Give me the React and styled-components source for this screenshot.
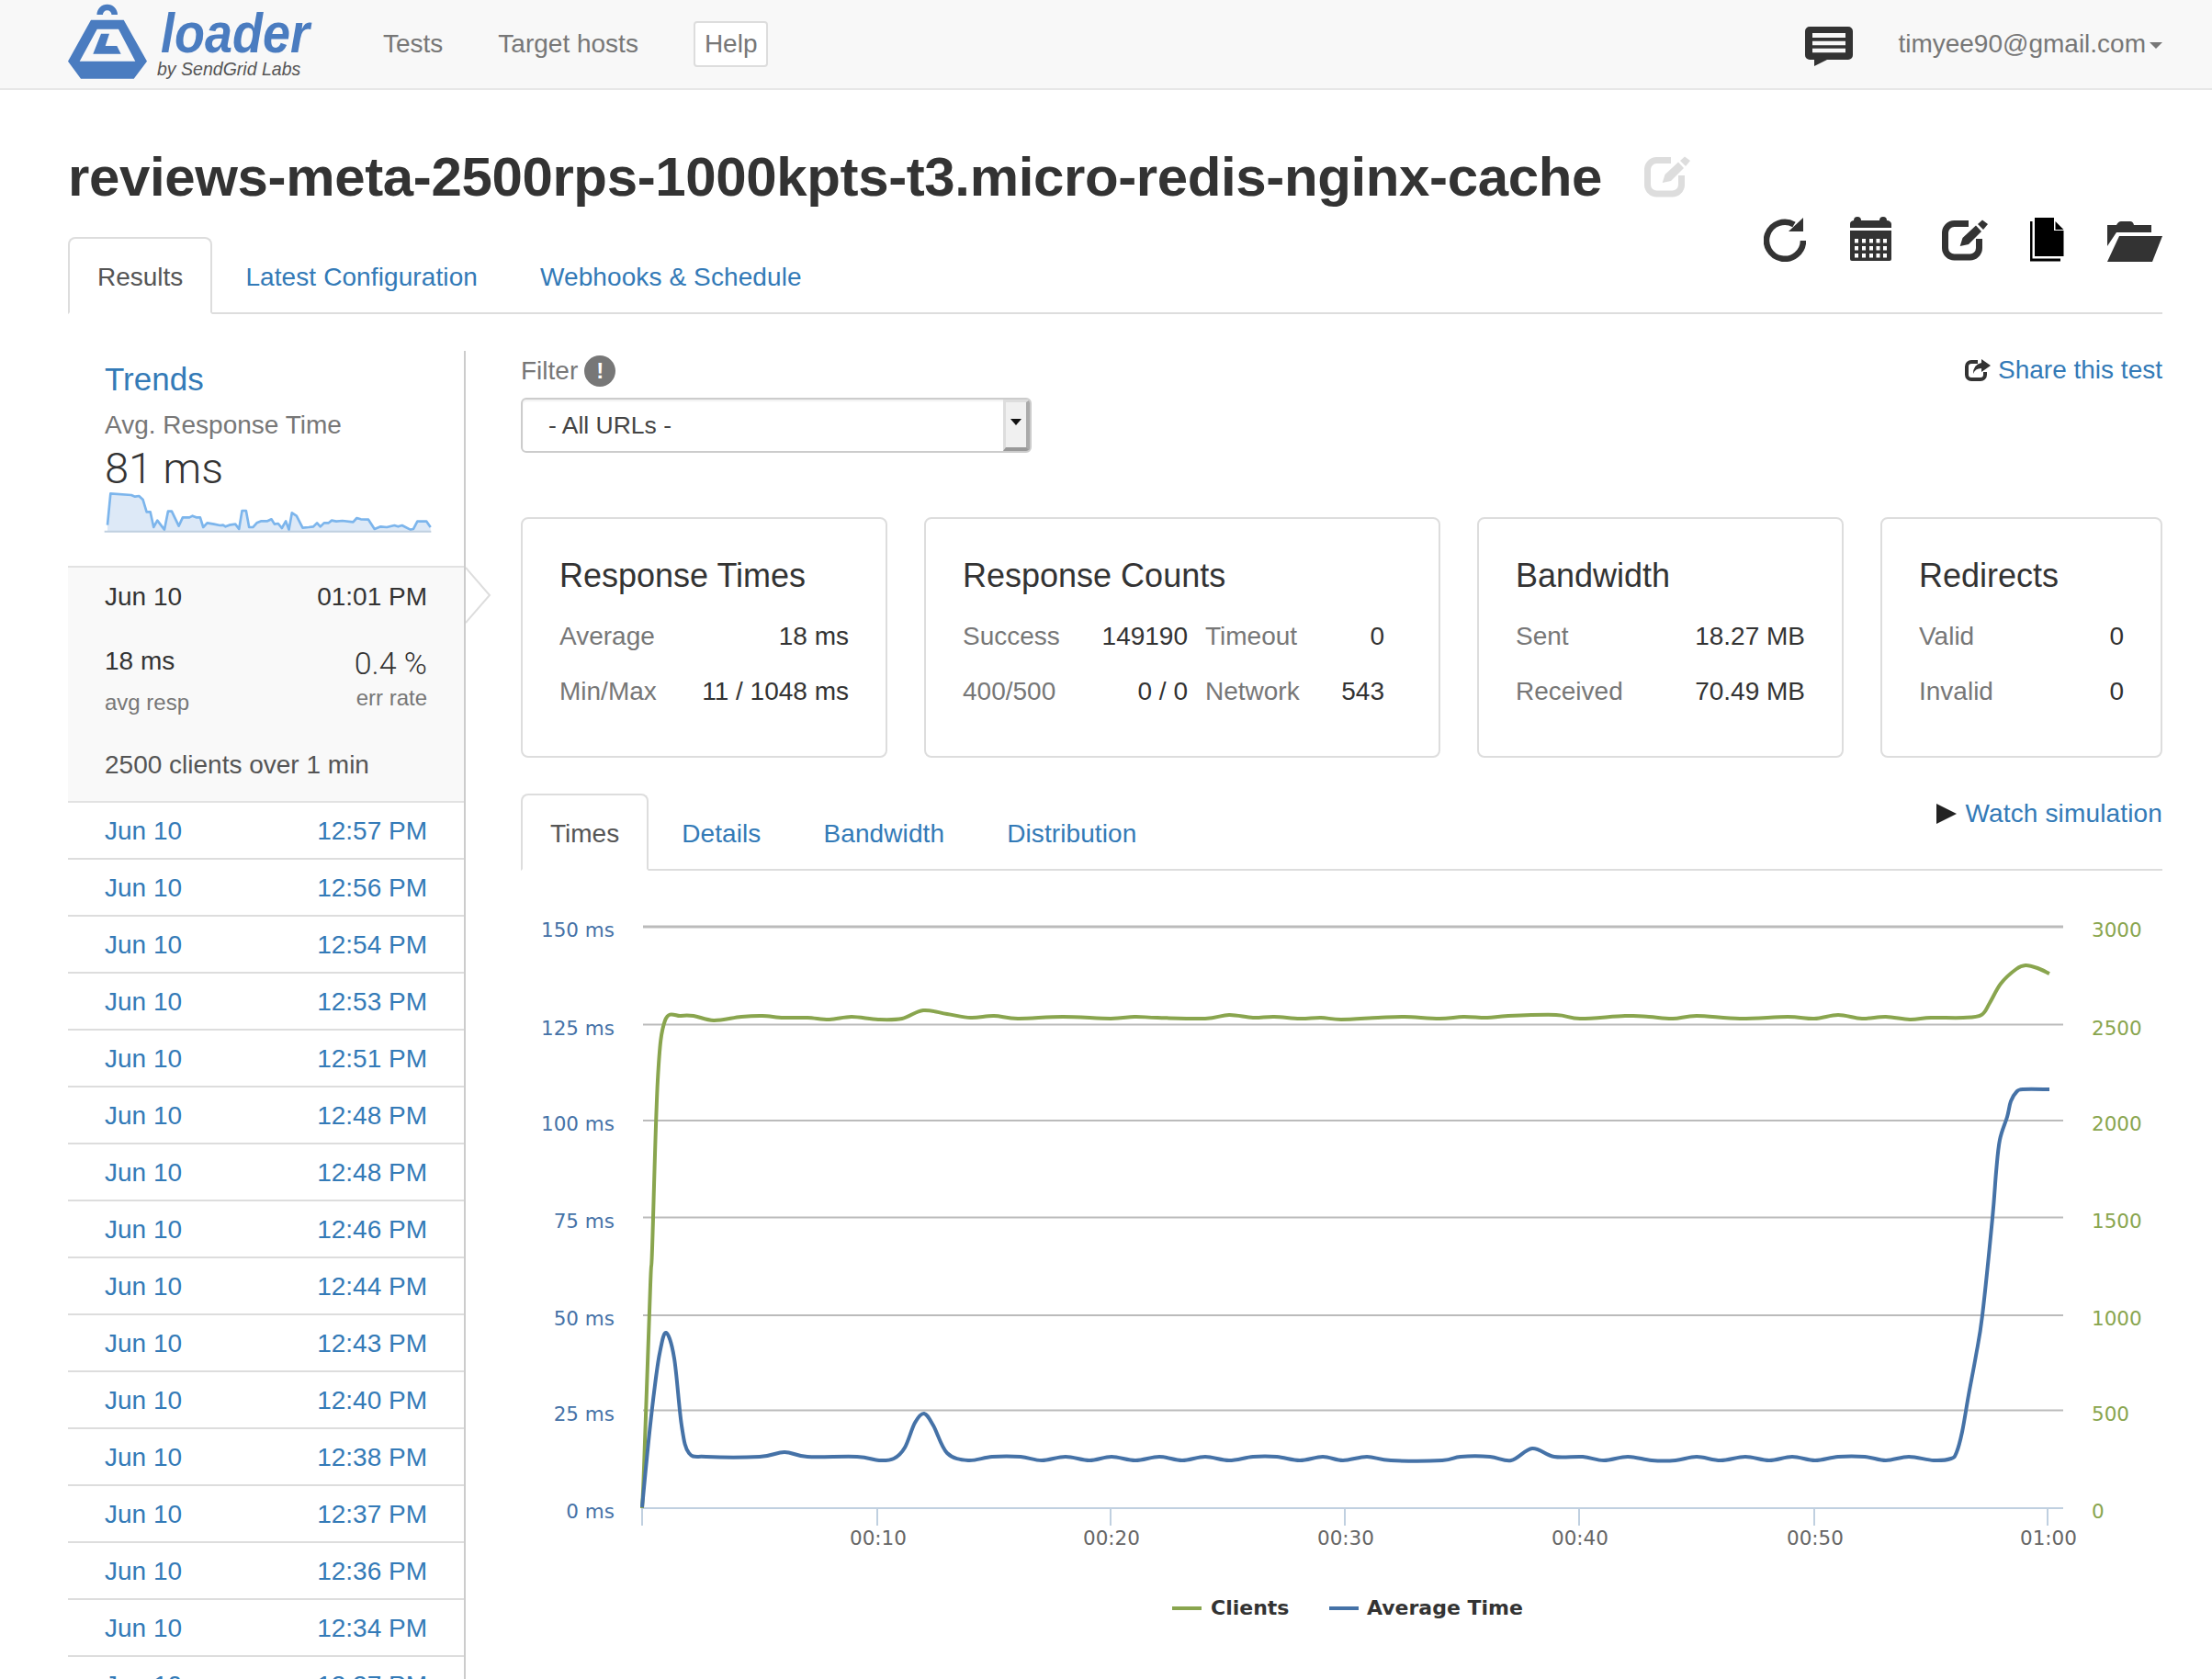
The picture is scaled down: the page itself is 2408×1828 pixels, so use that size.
import React from "react";
import styled, { createGlobalStyle } from "styled-components";

const GlobalStyle = createGlobalStyle`
	html, body {
		margin: 0;
		background: #fff;
		height: 1828px;
		overflow: hidden;
	}
	body {
		font-family: "Liberation Sans", Arial, sans-serif;
		font-size: 28px;
		color: #333;
	}
`;

const BLUE = "#337ab7";

// Navbar
const Navbar = styled.nav`
	display: flex;
	align-items: center;
	height: 96px;
	padding: 0 54px 0 74px;
	background: #f8f8f8;
	border-bottom: 2px solid #e7e7e7;
`;

const Brand = styled.div`
	display: flex;
	align-items: flex-start;
	width: 343px;
	height: 96px;
`;

const BrandText = styled.div`
	display: flex;
	flex-direction: column;
	margin-left: 13px;
`;

const BrandName = styled.span`
	font-size: 62px;
	font-weight: 700;
	font-style: italic;
	line-height: 50px;
	margin-top: 11px;
	transform: scaleX(0.87);
	transform-origin: left center;
	color: #4a7cc0;
`;

const BrandSub = styled.span`
	font-size: 21px;
	font-style: italic;
	line-height: 24px;
	margin: 2px 0 0 -4px;
	transform: scaleX(0.93);
	transform-origin: left center;
	color: #555;
`;

const NavLink = styled.a`
	color: #777;
	margin-right: 60px;
`;

const HelpButton = styled.a`
	display: flex;
	align-items: center;
	height: 46px;
	padding: 0 10px;
	border: 2px solid #ddd;
	border-radius: 4px;
	color: #777;
	background: #fff;
`;

const NavRight = styled.div`
	display: flex;
	align-items: center;
	margin-left: auto;
	color: #777;
`;

const ChatIcon = styled.svg`
	width: 52px;
	height: 43px;
	margin: 4px 49px 0 0;
`;

const Caret = styled.span`
	width: 0;
	height: 0;
	margin: 2px 0 0 4px;
	border-style: solid;
	border-width: 7px 7px 0;
	border-color: #777 transparent transparent;
`;

// Page header
const Page = styled.div`
	padding: 0 54px 0 74px;
`;

const TitleRow = styled.div`
	display: flex;
	align-items: center;
	margin: 60px 0 30px;
	height: 70px;
`;

const Title = styled.h1`
	margin: 0;
	font-size: 60px;
	line-height: 70px;
	font-weight: 700;
	letter-spacing: -0.37px;
	color: #333;
`;

const TitleEdit = styled.svg`
	width: 51px;
	height: 46px;
	margin: 0 0 0 46px;
	fill: #ddd;
	stroke: #ddd;
`;

const TabBar = styled.div`
	display: flex;
	align-items: flex-start;
	justify-content: space-between;
	height: 82px;
	border-bottom: 2px solid #ddd;
`;

const Tabs = styled.div`
	display: flex;
`;

const Tab = styled.a`
	display: block;
	box-sizing: border-box;
	height: 84px;
	line-height: 84px;
	padding: 0 30px;
	margin-right: 4px;
	letter-spacing: 0.1px;
	border: 2px solid transparent;
	border-radius: 8px 8px 0 0;
	color: ${BLUE};
	${(p) => p.$active && `
		color: #555;
		letter-spacing: 0;
		background: #fff;
		border-color: #ddd #ddd #fff;
	`}
`;

const Toolbar = styled.div`
	display: flex;
	align-items: flex-end;
	height: 51px;
	margin-top: -24px;
`;

const ToolIcon = styled.svg`
	display: block;
	margin-left: ${(p) => p.$gap || 0}px;
	flex: none;
`;

// Two column body
const Body = styled.div`
	display: flex;
	margin-top: 40px;
`;

const Sidebar = styled.aside`
	position: relative;
	box-sizing: border-box;
	width: 433px;
	height: 1500px;
	border-right: 2px solid #ccc;
	flex: none;
`;

const Trends = styled.div`
	padding: 11px 0 0 40px;
`;

const TrendTitle = styled.a`
	display: block;
	font-size: 35px;
	line-height: 40px;
	color: ${BLUE};
`;

const TrendLabel = styled.div`
	margin-top: 14px;
	line-height: 32px;
	color: #777;
`;

const TrendValue = styled.div`
	margin-top: 6px;
	font-family: Roboto, "Liberation Sans", sans-serif;
	font-weight: 300;
	font-size: 47px;
	line-height: 50px;
	color: #333;
`;

const Spark = styled.svg`
	display: block;
	width: 357px;
	height: 45px;
	margin: 0 0 36px -1px;
`;

const Selected = styled.div`
	position: relative;
	box-sizing: border-box;
	height: 258px;
	padding: 16px 40px 0;
	background: #f9f9f9;
	border-top: 2px solid #e2e2e2;
	border-bottom: 2px solid #e2e2e2;
`;

const SelectedArrow = styled.svg`
	position: absolute;
	top: -1px;
	right: -32px;
	width: 30px;
	height: 62px;
`;

const RunLine = styled.div`
	display: flex;
	justify-content: space-between;
	line-height: 32px;
`;

const RunStats = styled.div`
	display: flex;
	justify-content: space-between;
	margin-top: 38px;
`;

const RunStat = styled.div`
	display: flex;
	flex-direction: column;
	align-items: ${(p) => (p.$right ? "flex-end" : "flex-start")};
`;

const RunValue = styled.span`
	font-size: ${(p) => (p.$big ? 34 : 28)}px;
	line-height: 32px;
	margin-top: ${(p) => (p.$big ? 2 : 0)}px;
	${(p) => p.$big && "font-family: Roboto, 'Liberation Sans', sans-serif; font-weight: 300;"}
`;

const RunLabel = styled.span`
	font-size: 24px;
	line-height: 28px;
	margin-top: ${(p) => (p.$right ? 8 : 15)}px;
	color: #777;
`;

const RunSummary = styled.div`
	margin-top: 38px;
	line-height: 32px;
	color: #555;
`;

const RunRow = styled.a`
	display: flex;
	box-sizing: border-box;
	justify-content: space-between;
	height: 62px;
	line-height: 62px;
	padding: 0 40px;
	border-bottom: 2px solid #ddd;
	color: ${BLUE};
`;

const Main = styled.main`
	flex: 1;
	min-width: 0;
	margin-left: 60px;
`;

const FilterBar = styled.div`
	display: flex;
	justify-content: space-between;
	height: 42px;
`;

const FilterLabel = styled.div`
	display: flex;
	align-items: center;
	padding-top: 2px;
	line-height: 42px;
	color: #777;
`;

const Bang = styled.span`
	display: flex;
	align-items: center;
	justify-content: center;
	width: 34px;
	height: 34px;
	margin-left: 7px;
	border-radius: 50%;
	background: #777;
	color: #fff;
	font-weight: 700;
	font-size: 24px;
`;

const ShareLink = styled.a`
	display: flex;
	align-items: center;
	color: ${BLUE};
`;

const ShareIcon = styled.svg`
	width: 28px;
	height: 25px;
	margin-right: 8px;
`;

const FakeSelect = styled.div`
	display: flex;
	align-items: center;
	justify-content: space-between;
	box-sizing: border-box;
	width: 556px;
	height: 60px;
	margin-top: 9px;
	padding: 0 0 0 28px;
	border: 2px solid #ccc;
	border-radius: 6px;
	box-shadow: inset 0 2px 2px rgba(0, 0, 0, 0.06);
	font-size: 26.5px;
	color: #444;
`;

const SelectButton = styled.span`
	display: flex;
	align-items: center;
	justify-content: center;
	box-sizing: border-box;
	width: 29px;
	height: 56px;
	background: #f0f0f0;
	border-style: solid;
	border-width: 3px 4px 4px 3px;
	border-color: #ddd #aaa #999 #ddd;
	border-radius: 0 4px 4px 0;
	&:after {
		content: "";
		margin-top: -6px;
		border-style: solid;
		border-width: 7px 6px 0;
		border-color: #111 transparent transparent;
	}
`;

const Cards = styled.div`
	display: flex;
	gap: 40px;
	margin-top: 70px;
`;

const Card = styled.section`
	box-sizing: border-box;
	width: ${(p) => p.$w}px;
	height: 262px;
	padding: 42px 0 0 40px;
	border: 2px solid #ddd;
	border-radius: 8px;
`;

const CardTitle = styled.h3`
	margin: 0 0 30px;
	font-size: 36px;
	line-height: 40px;
	font-weight: 400;
	color: #333;
`;

const CardColumns = styled.div`
	display: flex;
	gap: 19px;
`;

const StatGroup = styled.div`
	display: flex;
	flex-direction: column;
	gap: 28px;
	width: ${(p) => p.$w}px;
`;

const StatRow = styled.div`
	display: flex;
	justify-content: space-between;
	line-height: 32px;
	color: #333;
`;

const StatName = styled.span`
	color: #777;
`;

const ChartHead = styled.div`
	position: relative;
	margin-top: 39px;
`;

const WatchLink = styled.a`
	position: absolute;
	right: 0;
	top: 4px;
	display: flex;
	align-items: center;
	line-height: 36px;
	letter-spacing: 0.15px;
	color: ${BLUE};
	&:before {
		content: "";
		margin-right: 9px;
		border-style: solid;
		border-width: 11px 0 11px 22px;
		border-color: transparent transparent transparent #222;
	}
`;

const ChartSvg = styled.svg`
	display: block;
	width: 1787px;
	height: 800px;
	margin-top: 41px;
`;

// Smooth line through the sampled points, like the chart's spline series
const spline = (pts) => {
	let d = `M${pts[0][0]} ${pts[0][1]}`;
	for (let i = 0; i < pts.length - 1; i++) {
		const p0 = pts[i - 1] || pts[i];
		const p1 = pts[i];
		const p2 = pts[i + 1];
		const p3 = pts[i + 2] || p2;
		const t = 6;
		d += ` C${(p1[0] + (p2[0] - p0[0]) / t).toFixed(1)} ${(p1[1] + (p2[1] - p0[1]) / t).toFixed(1)} ${(p2[0] - (p3[0] - p1[0]) / t).toFixed(1)} ${(p2[1] - (p3[1] - p1[1]) / t).toFixed(1)} ${p2[0]} ${p2[1]}`;
	}
	return d;
};

const AVG_TIME = [
	[699, 1642], [706, 1570], [712, 1517], [718, 1475], [725, 1452], [734, 1480], [742, 1553], [750, 1583], [769, 1587], [827, 1587], [854, 1582], [879, 1587], [933, 1587], [957, 1591], [973, 1589], [985, 1577], [996, 1550], [1006, 1540], [1016, 1553], [1031, 1583], [1054, 1591], [1080, 1587], [1111, 1587], [1134, 1591], [1160, 1587], [1186, 1591], [1210, 1587], [1236, 1591], [1262, 1587], [1287, 1591], [1312, 1587], [1338, 1591], [1364, 1587], [1390, 1587], [1415, 1591], [1440, 1587], [1462, 1591], [1488, 1587], [1514, 1591], [1570, 1591], [1590, 1587], [1622, 1587], [1645, 1591], [1668, 1578], [1692, 1587], [1723, 1587], [1746, 1591], [1772, 1587], [1798, 1591], [1824, 1591], [1847, 1587], [1873, 1591], [1900, 1587], [1926, 1591], [1951, 1587], [1976, 1591], [2001, 1587], [2030, 1587], [2053, 1591], [2078, 1587], [2105, 1591], [2124, 1589], [2130, 1582], [2136, 1560], [2143, 1520], [2151, 1477], [2158, 1433], [2169, 1327], [2173, 1277], [2177, 1242], [2185, 1217], [2189, 1200], [2195, 1190], [2202, 1187], [2231, 1187],
];

const CLIENTS = [
	[699, 1643], [701, 1600], [708, 1400], [710, 1360], [716, 1177], [724, 1112], [741, 1107], [755, 1107], [777, 1112], [807, 1108], [830, 1107], [853, 1109], [879, 1109], [903, 1111], [927, 1108], [956, 1111], [982, 1110], [1005, 1101], [1031, 1105], [1057, 1109], [1082, 1107], [1108, 1110], [1157, 1108], [1209, 1110], [1235, 1108], [1260, 1109], [1312, 1110], [1338, 1106], [1364, 1109], [1387, 1108], [1415, 1110], [1438, 1109], [1460, 1111], [1500, 1109], [1529, 1108], [1567, 1110], [1593, 1108], [1619, 1109], [1642, 1107], [1694, 1106], [1720, 1110], [1769, 1107], [1795, 1108], [1821, 1110], [1847, 1107], [1894, 1110], [1946, 1108], [1975, 1110], [2001, 1106], [2027, 1110], [2053, 1108], [2079, 1111], [2102, 1109], [2137, 1109], [2157, 1106], [2166, 1093], [2178, 1072], [2195, 1056], [2205, 1052], [2218, 1055], [2231, 1061],
];

const SPARK = [
	[172, 215], [182, 112], [250, 117], [262, 122], [275, 120], [288, 132], [300, 172], [312, 172], [323, 222], [335, 200], [358, 230], [370, 170], [382, 170], [405, 218], [418, 190], [440, 190], [450, 185], [462, 190], [475, 190], [485, 222], [498, 208], [520, 212], [540, 216], [550, 215], [558, 220], [570, 215], [590, 212], [602, 228], [612, 168], [625, 168], [635, 222], [648, 222], [660, 208], [675, 202], [695, 202], [708, 196], [718, 212], [730, 210], [742, 225], [755, 202], [765, 230], [775, 175], [790, 185], [810, 224], [830, 222], [845, 220], [857, 208], [868, 220], [880, 208], [895, 208], [905, 200], [920, 203], [940, 201], [975, 205], [987, 192], [1000, 196], [1025, 197], [1045, 228], [1065, 220], [1085, 222], [1110, 216], [1122, 220], [1135, 216], [1162, 230], [1172, 228], [1185, 203], [1215, 203], [1228, 222],
];

const GRID = [
	{ y: 1010, left: "150 ms", right: "3000", w: 3 },
	{ y: 1116.5, left: "125 ms", right: "2500", w: 2 },
	{ y: 1221, left: "100 ms", right: "2000", w: 2 },
	{ y: 1326.5, left: "75 ms", right: "1500", w: 2 },
	{ y: 1433, left: "50 ms", right: "1000", w: 2 },
	{ y: 1536.5, left: "25 ms", right: "500", w: 2 },
];

const X_TICKS = [
	{ x: 955, label: "00:10" },
	{ x: 1209, label: "00:20" },
	{ x: 1464, label: "00:30" },
	{ x: 1719, label: "00:40" },
	{ x: 1975, label: "00:50" },
	{ x: 2229, label: "01:00" },
];

const RUNS = ["12:57 PM", "12:56 PM", "12:54 PM", "12:53 PM", "12:51 PM", "12:48 PM", "12:48 PM", "12:46 PM", "12:44 PM", "12:43 PM", "12:40 PM", "12:38 PM", "12:37 PM", "12:36 PM", "12:34 PM", "12:27 PM"];

const EditShape = () => (
	<>
		<path d="M29 4.5H14A10 10 0 0 0 3.5 15V31A10 10 0 0 0 14 41H30A10 10 0 0 0 40.5 31V21" fill="none" strokeWidth="7" />
		<path d="M19.7 29L22.5 20L37 6.5L43 13L29 27Z" stroke="none" />
		<path d="M39 5L44 0.5L50 5L45 11Z" stroke="none" />
	</>
);

const Chart = () => (
	<ChartSvg viewBox="567 990 1787 800" fontFamily="'DejaVu Sans', sans-serif" fontSize="21.5">
		{GRID.map((g) => (
			<g key={g.y}>
				<line x1="700" x2="2246" y1={g.y} y2={g.y} stroke="#bbb" strokeWidth={g.w} />
				<text x="669" y={g.y + 11} textAnchor="end" fill="#4572a7">{g.left}</text>
				<text x="2277" y={g.y + 11} fill="#89a54e">{g.right}</text>
			</g>
		))}
		<line x1="699" x2="2246" y1="1643" y2="1643" stroke="#c0d0e0" strokeWidth="2" />
		<line x1="699" x2="699" y1="1643" y2="1662" stroke="#c0d0e0" strokeWidth="2" />
		<text x="669" y="1654" textAnchor="end" fill="#4572a7">0 ms</text>
		<text x="2277" y="1654" fill="#89a54e">0</text>
		{X_TICKS.map((t) => (
			<g key={t.label}>
				<line x1={t.x} x2={t.x} y1="1643" y2="1662" stroke="#c0d0e0" strokeWidth="2" />
				<text x={t.x + 1} y="1683" textAnchor="middle" fill="#666">{t.label}</text>
			</g>
		))}
		<path d={spline(CLIENTS)} fill="none" stroke="#89a54e" strokeWidth="4" strokeLinejoin="round" />
		<path d={spline(AVG_TIME)} fill="none" stroke="#4572a7" strokeWidth="4" strokeLinejoin="round" />
		<line x1="1276" x2="1308" y1="1752" y2="1752" stroke="#89a54e" strokeWidth="4" />
		<text x="1318" y="1759" fontWeight="700" fontSize="22" fill="#333">Clients</text>
		<line x1="1447" x2="1479" y1="1752" y2="1752" stroke="#4572a7" strokeWidth="4" />
		<text x="1488" y="1759" fontWeight="700" fontSize="22" fill="#333">Average Time</text>
	</ChartSvg>
);

const App = () => {
	const sparkLine = SPARK.map((p) => p.join(",")).join(" ");
	return (
		<>
			<GlobalStyle />
			<Navbar>
				<Brand>
					<svg width="88" height="88" viewBox="74 0 88 88" style={{ flex: "none" }}>
						<path d="M108.7 16A8 8 0 1 1 124.7 16" fill="none" stroke="#4a7cc0" strokeWidth="6.5" />
						<path fillRule="evenodd" fill="#4a7cc0" d="M99 21.7H134.7L160 66.7L145.7 85.7H88L74 66.7ZM105.7 31.7L86.7 66.7H147.3L129 31.7Z" />
						<path fill="#4a7cc0" d="M110 36.7H119L114.7 50H127.3L131.7 58.7H101.3Z" />
					</svg>
					<BrandText>
						<BrandName>loader</BrandName>
						<BrandSub>by SendGrid Labs</BrandSub>
					</BrandText>
				</Brand>
				<NavLink>Tests</NavLink>
				<NavLink>Target hosts</NavLink>
				<HelpButton>Help</HelpButton>
				<NavRight>
					<ChatIcon viewBox="0 0 52 43">
						<path fill="#333" d="M5 0H47A5 5 0 0 1 52 5V31A5 5 0 0 1 47 36H24L10 43V36H5A5 5 0 0 1 0 31V5A5 5 0 0 1 5 0Z" />
						<path fill="#f8f8f8" d="M8 7H44V12H8ZM8 15.7H44V20.3H8ZM8 23.7H44V28.3H8Z" />
					</ChatIcon>
					timyee90@gmail.com
					<Caret />
				</NavRight>
			</Navbar>
			<Page>
				<TitleRow>
					<Title>reviews-meta-2500rps-1000kpts-t3.micro-redis-nginx-cache</Title>
					<TitleEdit viewBox="0 0 51 46"><EditShape /></TitleEdit>
				</TitleRow>
				<TabBar>
					<Tabs>
						<Tab $active>Results</Tab>
						<Tab>Latest Configuration</Tab>
						<Tab>Webhooks &amp; Schedule</Tab>
					</Tabs>
					<Toolbar>
						<ToolIcon width="46" height="48" viewBox="0 -1 46 48">
							<path d="M33 6.5A20 20 0 1 0 43 24" fill="none" stroke="#333" strokeWidth="6.5" />
							<path d="M43 -1V14H27Z" fill="#333" />
						</ToolIcon>
						<ToolIcon $gap={48} width="45" height="49" viewBox="0 0 45 49">
							<path fill="#333" d="M4 4A4 4 0 0 1 12 4H32A4 4 0 0 1 40 4A5 4 0 0 1 45 8V12H0V8A5 4 0 0 1 4 4Z" />
							<path fill="#333" d="M0 15H45V46A2 2 0 0 1 43 48H2A2 2 0 0 1 0 46Z" />
							<path fill="#fff" d="M5 24h4v4.5H5ZM13 24h4v4.5h-4ZM21 24h4v4.5h-4ZM28.5 24h4v4.5h-4ZM36 24h4v4.5h-4ZM5 32h4v4.5H5ZM13 32h4v4.5h-4ZM21 32h4v4.5h-4ZM28.5 32h4v4.5h-4ZM36 32h4v4.5h-4ZM5 40h4v4.5H5ZM13 40h4v4.5h-4ZM21 40h4v4.5h-4ZM28.5 40h4v4.5h-4ZM36 40h4v4.5h-4Z" />
						</ToolIcon>
						<ToolIcon $gap={55} width="51" height="46" viewBox="0 0 51 46" fill="#333" stroke="#333"><EditShape /></ToolIcon>
						<ToolIcon $gap={45} width="37" height="48" viewBox="0 0 37 48">
							<path d="M5 0H26V14H36.5V42H5Z" fill="#000" />
							<path d="M27.5 4L36.5 13H27.5Z" fill="#000" />
							<path d="M0 4H2.5V44.5H33V47.5H0Z" fill="#000" />
						</ToolIcon>
						<ToolIcon $gap={47} width="60" height="44" viewBox="0 0 60 44">
							<path fill="#333" d="M0 4H10Q12 0 15 0H25Q28 0 29 4H48V12H10L0 27Z" />
							<path fill="#333" d="M13 16H60L49 44H0Z" />
						</ToolIcon>
					</Toolbar>
				</TabBar>
				<Body>
					<Sidebar>
						<Trends>
							<TrendTitle>Trends</TrendTitle>
							<TrendLabel>Avg. Response Time</TrendLabel>
							<TrendValue>81 ms</TrendValue>
							<Spark viewBox="160 105 1072 135">
								<polygon points={`172,236 ${sparkLine} 1228,236`} fill="#dde9f7" />
								<polyline points={sparkLine} fill="none" stroke="#7cb5ec" strokeWidth="8" strokeLinejoin="round" />
								<line x1="162" x2="1230" y1="236" y2="236" stroke="#c0d0e0" strokeWidth="6" />
							</Spark>
						</Trends>
						<Selected>
							<SelectedArrow viewBox="0 0 30 62">
								<path d="M0 1L26 31L0 61" fill="#fff" stroke="#ddd" strokeWidth="2" />
							</SelectedArrow>
							<RunLine><span>Jun 10</span><span>01:01 PM</span></RunLine>
							<RunStats>
								<RunStat>
									<RunValue>18 ms</RunValue>
									<RunLabel>avg resp</RunLabel>
								</RunStat>
								<RunStat $right>
									<RunValue $big>0.4 %</RunValue>
									<RunLabel $right>err rate</RunLabel>
								</RunStat>
							</RunStats>
							<RunSummary>2500 clients over 1 min</RunSummary>
						</Selected>
						{RUNS.map((time, i) => (
							<RunRow key={i}><span>Jun 10</span><span>{time}</span></RunRow>
						))}
					</Sidebar>
					<Main>
						<FilterBar>
							<FilterLabel>Filter<Bang>!</Bang></FilterLabel>
							<ShareLink>
								<ShareIcon viewBox="0 0 28 25">
									<path d="M14 3H7A5 5 0 0 0 2 8V17A5 5 0 0 0 7 22H17A5 5 0 0 0 22 17V14" fill="none" stroke="#333" strokeWidth="4" />
									<path d="M18 0L28 7L18 14V10Q11 10 9 16Q9 6 18 4Z" fill="#333" />
								</ShareIcon>
								Share this test
							</ShareLink>
						</FilterBar>
						<FakeSelect>- All URLs -<SelectButton /></FakeSelect>
						<Cards>
							<Card $w={399}>
								<CardTitle>Response Times</CardTitle>
								<StatGroup $w={315}>
									<StatRow><StatName>Average</StatName><span>18 ms</span></StatRow>
									<StatRow><StatName>Min/Max</StatName><span>11 / 1048 ms</span></StatRow>
								</StatGroup>
							</Card>
							<Card $w={562}>
								<CardTitle>Response Counts</CardTitle>
								<CardColumns>
									<StatGroup $w={245}>
										<StatRow><StatName>Success</StatName><span>149190</span></StatRow>
										<StatRow><StatName>400/500</StatName><span>0 / 0</span></StatRow>
									</StatGroup>
									<StatGroup $w={195}>
										<StatRow><StatName>Timeout</StatName><span>0</span></StatRow>
										<StatRow><StatName>Network</StatName><span>543</span></StatRow>
									</StatGroup>
								</CardColumns>
							</Card>
							<Card $w={399}>
								<CardTitle>Bandwidth</CardTitle>
								<StatGroup $w={315}>
									<StatRow><StatName>Sent</StatName><span>18.27 MB</span></StatRow>
									<StatRow><StatName>Received</StatName><span>70.49 MB</span></StatRow>
								</StatGroup>
							</Card>
							<Card $w={307}>
								<CardTitle>Redirects</CardTitle>
								<StatGroup $w={223}>
									<StatRow><StatName>Valid</StatName><span>0</span></StatRow>
									<StatRow><StatName>Invalid</StatName><span>0</span></StatRow>
								</StatGroup>
							</Card>
						</Cards>
						<ChartHead>
							<WatchLink>Watch simulation</WatchLink>
							<TabBar>
								<Tabs>
									<Tab $active>Times</Tab>
									<Tab>Details</Tab>
									<Tab>Bandwidth</Tab>
									<Tab>Distribution</Tab>
								</Tabs>
							</TabBar>
						</ChartHead>
						<Chart />
					</Main>
				</Body>
			</Page>
		</>
	);
};

export default App;
